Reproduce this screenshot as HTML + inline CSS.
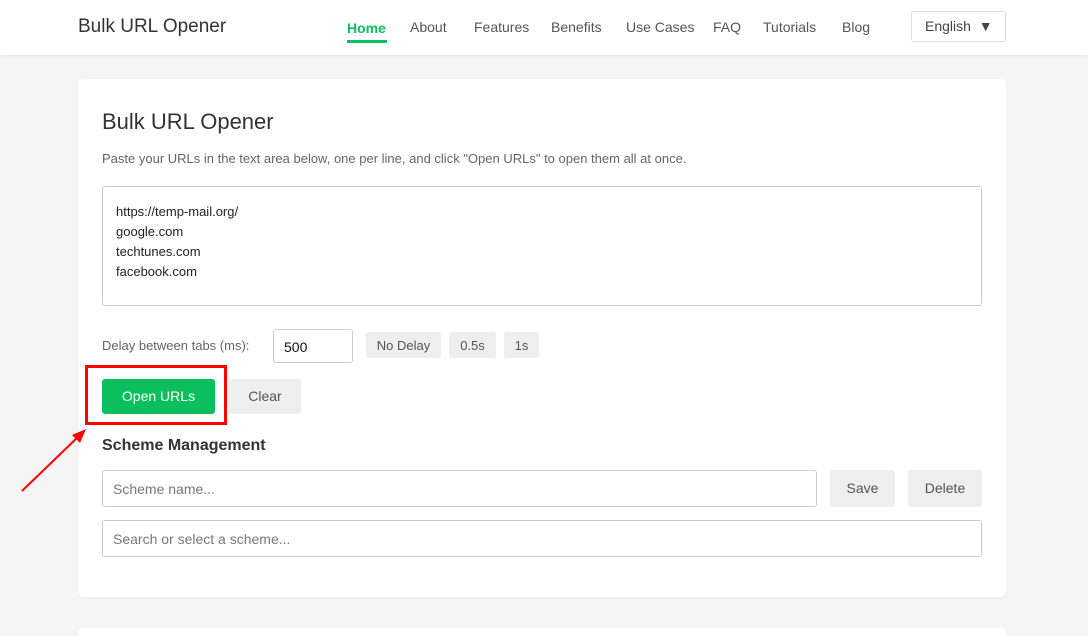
<!DOCTYPE html>
<html><head><style>
*{box-sizing:border-box;margin:0;padding:0}
html,body{width:1088px;height:636px}
body{background:#f5f5f5;font-family:"Liberation Sans",sans-serif;position:relative;overflow:hidden;color:#333}
.hdr{position:absolute;left:0;top:0;width:1088px;height:55px;background:#fff;box-shadow:0 1px 3px rgba(0,0,0,.08)}
.logo{position:absolute;left:78px;top:16px;font-size:19px;color:#333}
.nav a{position:absolute;top:19px;font-size:14px;color:#555;text-decoration:none}
.lang{position:absolute;left:911px;top:11px;width:95px;height:31px;border:1px solid #ddd;border-radius:3px;font-size:14px;color:#444;padding:6px 0 0 13px}
.card{position:absolute;left:78px;top:79px;width:928px;height:518px;background:#fff;border-radius:6px;box-shadow:0 1px 3px rgba(0,0,0,.05)}
.abs{position:absolute}
.btn{position:absolute;background:#eee;border-radius:3px;color:#555;text-align:center}
.inp{position:absolute;border:1px solid #ccc;border-radius:3px;font-size:14px;color:#777;padding-left:10px}
</style></head><body>
<div class="hdr">
<div class="logo">Bulk URL Opener</div>
<div class="nav">
<a style="left:347px;color:#0bbf5d;font-weight:bold;top:20px">Home</a>
<div class="abs" style="left:347px;top:40px;width:40px;height:3px;background:#0bbf5d"></div>
<a style="left:410px">About</a><a style="left:474px">Features</a><a style="left:551px">Benefits</a><a style="left:626px">Use Cases</a><a style="left:713px">FAQ</a><a style="left:763px">Tutorials</a><a style="left:842px">Blog</a>
</div>
<div class="lang">English &nbsp;▼</div>
</div>
<div class="card"></div>
<div class="abs" style="left:102px;top:109px;font-size:22px;color:#333">Bulk URL Opener</div>
<div class="abs" style="left:102px;top:151px;font-size:13px;color:#666">Paste your URLs in the text area below, one per line, and click "Open URLs" to open them all at once.</div>
<div class="abs" style="left:102px;top:186px;width:880px;height:120px;border:1px solid #ccc;border-radius:3px;padding:15px 13px;font-size:13px;line-height:20px;color:#222">https://temp-mail.org/<br>google.com<br>techtunes.com<br>facebook.com</div>
<div class="abs" style="left:102px;top:338px;font-size:13px;color:#666">Delay between tabs (ms):</div>
<div class="inp" style="left:273px;top:329px;width:80px;height:34px;color:#111;padding-top:9px">500</div>
<div class="btn" style="left:366px;top:332px;width:75px;height:26px;font-size:13px;padding-top:6px">No Delay</div>
<div class="btn" style="left:449px;top:332px;width:47px;height:26px;font-size:13px;padding-top:6px">0.5s</div>
<div class="btn" style="left:504px;top:332px;width:35px;height:26px;font-size:13px;padding-top:6px">1s</div>
<div class="abs" style="left:102px;top:379px;width:113px;height:35px;background:#0bbf5d;border-radius:3px;color:#fff;font-size:14px;text-align:center;padding-top:9px">Open URLs</div>
<div class="btn" style="left:229px;top:379px;width:72px;height:35px;font-size:14px;padding-top:9px">Clear</div>
<div class="abs" style="left:85px;top:365px;width:142px;height:60px;border:3px solid #f00"></div>
<svg class="abs" style="left:18px;top:425px" width="72" height="70"><line x1="4" y1="66" x2="62" y2="10" stroke="#f00" stroke-width="2"/><polygon points="68,4 54,10 62,18" fill="#f00"/></svg>
<div class="abs" style="left:102px;top:437px;font-size:16px;font-weight:bold;color:#333">Scheme Management</div>
<div class="inp" style="left:102px;top:470px;width:715px;height:37px;padding-top:10px">Scheme name...</div>
<div class="btn" style="left:830px;top:470px;width:65px;height:37px;font-size:14px;padding-top:10px">Save</div>
<div class="btn" style="left:908px;top:470px;width:74px;height:37px;font-size:14px;padding-top:10px">Delete</div>
<div class="inp" style="left:102px;top:520px;width:880px;height:37px;padding-top:10px">Search or select a scheme...</div>
<div class="abs" style="left:78px;top:628px;width:928px;height:8px;background:#fff;border-radius:6px 6px 0 0"></div>
</body></html>
